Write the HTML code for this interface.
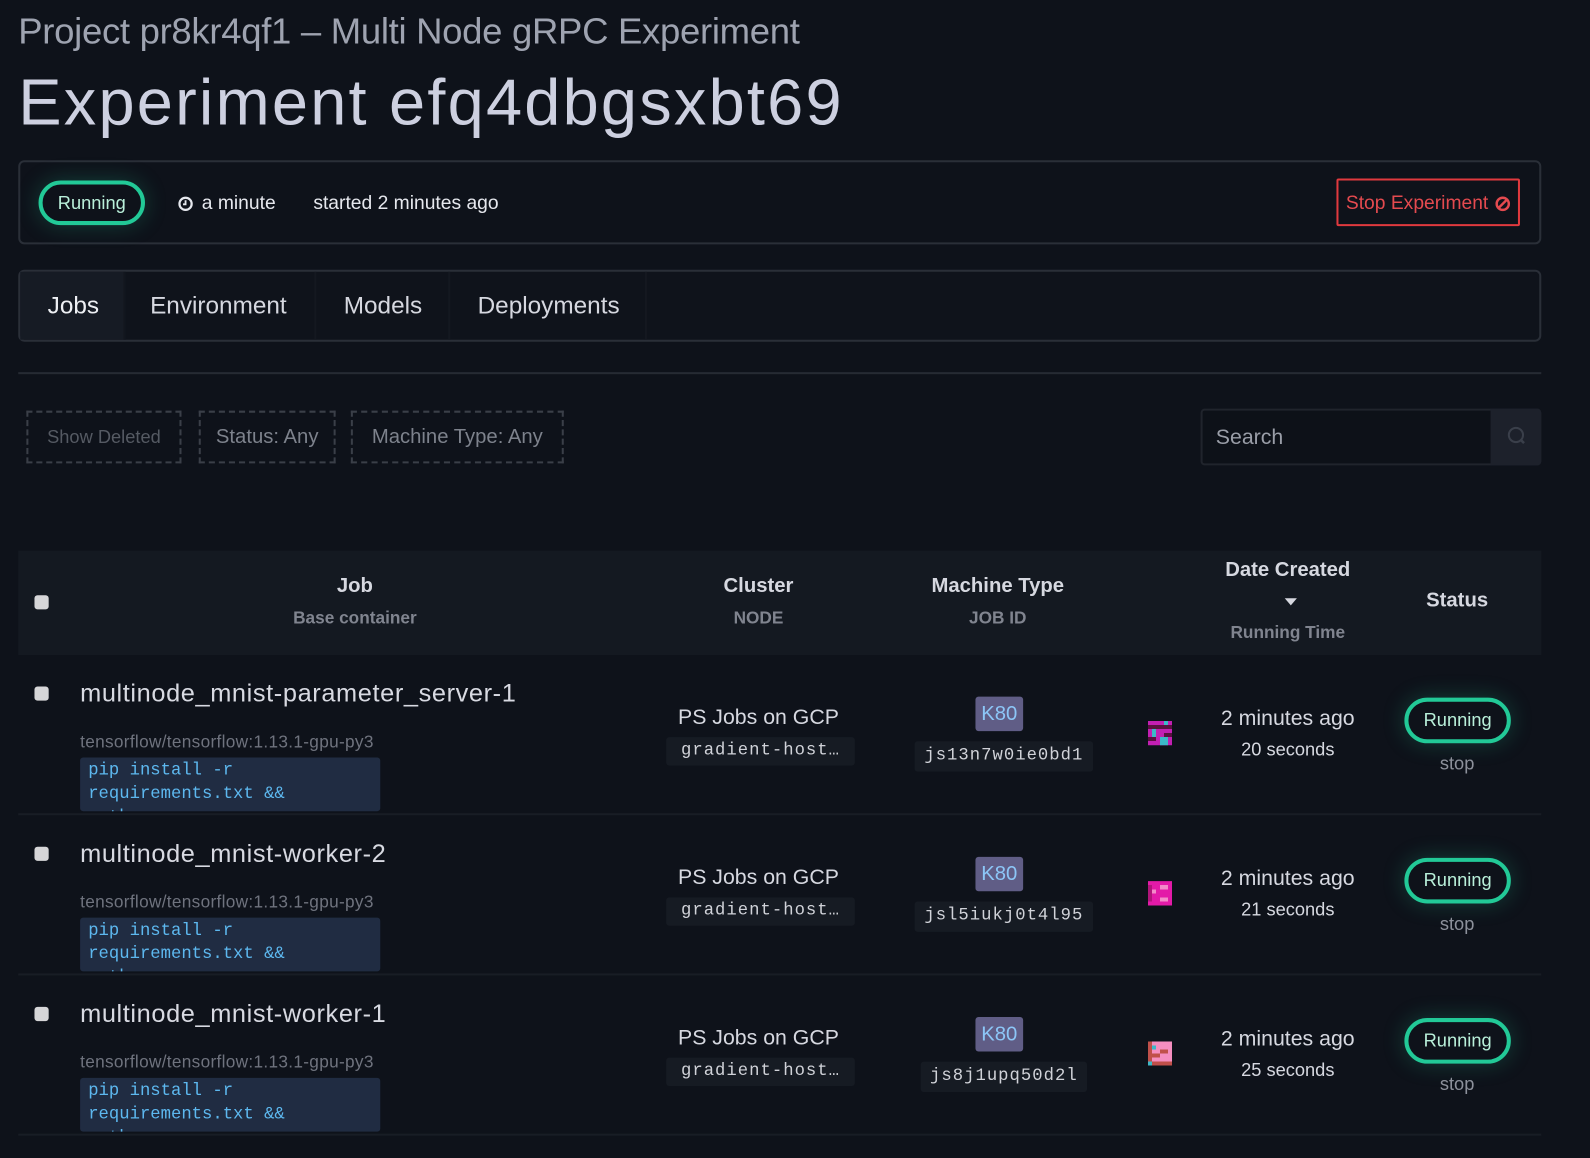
<!DOCTYPE html>
<html><head><meta charset="utf-8"><style>
html,body{margin:0;padding:0;background:#0e121a;width:1590px;height:1158px;overflow:hidden}
#w{position:absolute;left:0;top:0;width:1568px;height:1142px;transform:scale(1.014);transform-origin:0 0;font-family:"Liberation Sans",sans-serif;color:#cdd0da}
.a{position:absolute}
.c{text-align:center}
.pill{position:absolute;border:4px solid #22c997;border-radius:24px;box-sizing:border-box;color:#b9f0da;font-size:18px;display:flex;align-items:center;justify-content:center;box-shadow:0 0 22px rgba(34,201,151,.25)}
.cb{position:absolute;width:14px;height:14px;background:#d6d6d8;border-radius:3px}
.mono{font-family:"Liberation Mono",monospace}
.code{position:absolute;left:79px;width:296px;height:53px;background:#202c42;border-radius:3px;overflow:hidden;color:#5db8ef;font-size:17px;line-height:23px;padding:2px 8px;box-sizing:border-box}
.host{position:absolute;left:657px;width:186px;height:28px;background:#161b23;border-radius:3px;font-size:17px;color:#d0d2d8;text-align:center;line-height:28px;letter-spacing:1px}
.k80{position:absolute;left:962px;width:47px;height:34px;background:#605d86;border-radius:3px;color:#8cc6f7;font-size:20px;text-align:center;line-height:34px}
.jid{position:absolute;height:30px;background:#161b23;border-radius:3px;font-size:17px;color:#d0d2d8;text-align:center;line-height:30px;letter-spacing:1px}
.sep{position:absolute;left:18px;width:1502px;height:2px;background:#181d25}
.filt{position:absolute;top:405px;height:52px;border:2px dashed #3a3f48;box-sizing:border-box;font-size:20px;display:flex;align-items:center;justify-content:center;color:#7d828c}
.jt{position:absolute;left:79px;font-size:25px;color:#d8dae2;letter-spacing:0.6px}
</style></head><body><div id="w">
<div class="a" style="left:18px;top:10px;font-size:36px;color:#9ea3b0;letter-spacing:-0.3px">Project pr8kr4qf1 – Multi Node gRPC Experiment</div>
<div class="a" style="left:18px;top:64px;font-size:64px;color:#cdd0e0;letter-spacing:2.2px">Experiment efq4dbgsxbt69</div>

<div class="a" style="left:18px;top:158px;width:1502px;height:83px;border:2px solid #2a2f38;border-radius:6px;box-sizing:border-box"></div>
<div class="pill" style="left:38px;top:178px;width:105px;height:44px">Running</div>
<svg class="a" style="left:175px;top:193px" width="16" height="16" viewBox="0 0 16 16"><circle cx="8" cy="8" r="6" fill="none" stroke="#e6e8ee" stroke-width="2.2"/><path d="M8 4.5V8.5H5.5" fill="none" stroke="#e6e8ee" stroke-width="1.8"/></svg>
<div class="a" style="left:199px;top:190px;font-size:19px;color:#e6e8ee">a minute</div>
<div class="a" style="left:309px;top:190px;font-size:19px;color:#e6e8ee">started 2 minutes ago</div>
<div class="a" style="left:1318px;top:176px;width:181px;height:47px;border:2px solid #e0393e;border-radius:2px;box-sizing:border-box;color:#e44a4f;font-size:19px;display:flex;align-items:center;justify-content:center;gap:6px;padding-top:2px">Stop Experiment <svg width="16" height="16" viewBox="0 0 16 16"><circle cx="8" cy="8" r="6" fill="none" stroke="#e44a4f" stroke-width="2.4"/><path d="M4 12L12 4" stroke="#e44a4f" stroke-width="2.4"/></svg></div>

<div class="a" style="left:18px;top:266px;width:1502px;height:71px;border:2px solid #2a2f38;border-radius:6px;box-sizing:border-box;background:#0f131b"></div>
<div class="a" style="left:20px;top:268px;width:102px;height:67px;background:#161b24"></div>
<div class="a" style="left:122px;top:268px;width:2px;height:67px;background:#12161e"></div>
<div class="a" style="left:310px;top:268px;width:2px;height:67px;background:#141820"></div>
<div class="a" style="left:442px;top:268px;width:2px;height:67px;background:#141820"></div>
<div class="a" style="left:636px;top:268px;width:2px;height:67px;background:#141820"></div>
<div class="a" style="left:47px;top:288px;font-size:24px;color:#eef0f4">Jobs</div>
<div class="a" style="left:148px;top:288px;font-size:24px;color:#d6d8e0">Environment</div>
<div class="a" style="left:339px;top:288px;font-size:24px;color:#d6d8e0">Models</div>
<div class="a" style="left:471px;top:288px;font-size:24px;color:#d6d8e0">Deployments</div>

<div class="a" style="left:18px;top:367px;width:1502px;height:2px;background:#262b33"></div>

<div class="filt" style="left:26px;width:153px;font-size:18px;color:#555a63">Show Deleted</div>
<div class="filt" style="left:196px;width:135px">Status: Any</div>
<div class="filt" style="left:346px;width:210px">Machine Type: Any</div>
<div class="a" style="left:1184px;top:403px;width:336px;height:56px;border:2px solid #20242c;border-radius:4px;box-sizing:border-box;background:#0d1118"></div>
<div class="a" style="left:1470px;top:403px;width:50px;height:56px;background:#1d212b;border-radius:0 4px 4px 0"></div>
<svg class="a" style="left:1484px;top:418px" width="24" height="24" viewBox="0 0 24 24"><circle cx="11" cy="11" r="7" fill="none" stroke="#3a3f4a" stroke-width="2"/><path d="M16 16l3 3" stroke="#3a3f4a" stroke-width="2.5"/></svg>
<div class="a" style="left:1199px;top:420px;font-size:21px;color:#9a9ea8">Search</div>

<div class="a" style="left:18px;top:543px;width:1502px;height:103px;background:#141921"></div>
<div class="cb" style="left:34px;top:587px"></div>
<div class="a c" style="left:250px;width:200px;top:567px;font-size:20px;font-weight:bold;color:#d6d8e0">Job</div>
<div class="a c" style="left:250px;width:200px;top:600px;font-size:17px;font-weight:bold;color:#80848f">Base container</div>
<div class="a c" style="left:648px;width:200px;top:567px;font-size:20px;font-weight:bold;color:#d6d8e0">Cluster</div>
<div class="a c" style="left:648px;width:200px;top:600px;font-size:17px;font-weight:bold;color:#80848f">NODE</div>
<div class="a c" style="left:884px;width:200px;top:567px;font-size:20px;font-weight:bold;color:#d6d8e0">Machine Type</div>
<div class="a c" style="left:884px;width:200px;top:600px;font-size:17px;font-weight:bold;color:#80848f">JOB ID</div>
<div class="a c" style="left:1170px;width:200px;top:551px;font-size:20px;font-weight:bold;color:#d6d8e0">Date Created</div>
<div class="a" style="left:1267px;top:590px;width:0;height:0;border-left:6px solid transparent;border-right:6px solid transparent;border-top:7px solid #d6d8e0"></div>
<div class="a c" style="left:1170px;width:200px;top:614px;font-size:17px;font-weight:bold;color:#80848f">Running Time</div>
<div class="a c" style="left:1387px;width:100px;top:581px;font-size:20px;font-weight:bold;color:#d6d8e0">Status</div>

<!-- row1 -->
<div class="cb" style="left:34px;top:677px"></div>
<div class="jt" style="top:670px">multinode_mnist-parameter_server-1</div>
<div class="a" style="left:79px;top:722px;font-size:17px;color:#6f737e;letter-spacing:0.3px">tensorflow/tensorflow:1.13.1-gpu-py3</div>
<div class="code mono" style="top:747px">pip install -r<br>requirements.txt &amp;&amp;<br>python</div>
<div class="a c" style="left:648px;width:200px;top:696px;font-size:21px;color:#d6d8e0">PS Jobs on GCP</div>
<div class="host mono" style="top:727px">gradient-host…</div>
<div class="k80" style="top:687px">K80</div>
<div class="jid mono" style="left:902px;width:176px;top:731px">js13n7w0ie0bd1</div>
<svg class="a" style="left:1132px;top:711px" width="24" height="24" viewBox="0 0 6 6" shape-rendering="crispEdges"><rect width="6" height="6" fill="#c21fb3"/><rect x="0" y="1" width="6" height="1" fill="#5a1040"/><rect x="1" y="2" width="1" height="2" fill="#3cb8c8"/><rect x="4" y="0" width="1" height="1" fill="#3cb8c8"/><rect x="3" y="4" width="2" height="2" fill="#3cb8c8"/><rect x="0" y="4" width="2" height="1" fill="#5a1040"/><rect x="4" y="3" width="2" height="1" fill="#5a1040"/></svg>
<div class="a c" style="left:1170px;width:200px;top:697px;font-size:21px;color:#d6d8e0">2 minutes ago</div>
<div class="a c" style="left:1170px;width:200px;top:729px;font-size:18px;color:#d6d8e0">20 seconds</div>
<div class="pill" style="left:1385px;top:688px;width:105px;height:45px">Running</div>
<div class="a c" style="left:1387px;width:100px;top:743px;font-size:18px;color:#8d919b">stop</div>
<div class="sep" style="top:802px"></div>

<!-- row2 -->
<div class="cb" style="left:34px;top:835px"></div>
<div class="jt" style="top:828px">multinode_mnist-worker-2</div>
<div class="a" style="left:79px;top:880px;font-size:17px;color:#6f737e;letter-spacing:0.3px">tensorflow/tensorflow:1.13.1-gpu-py3</div>
<div class="code mono" style="top:905px">pip install -r<br>requirements.txt &amp;&amp;<br>python</div>
<div class="a c" style="left:648px;width:200px;top:854px;font-size:21px;color:#d6d8e0">PS Jobs on GCP</div>
<div class="host mono" style="top:885px">gradient-host…</div>
<div class="k80" style="top:845px">K80</div>
<div class="jid mono" style="left:902px;width:176px;top:889px">jsl5iukj0t4l95</div>
<svg class="a" style="left:1132px;top:869px" width="24" height="24" viewBox="0 0 6 6" shape-rendering="crispEdges"><rect width="6" height="6" fill="#e31aa8"/><rect x="3" y="1" width="2" height="1" fill="#f38bc9"/><rect x="1" y="2" width="1" height="1" fill="#f38bc9"/><rect x="3" y="4" width="2" height="1" fill="#f38bc9"/><rect x="0" y="1" width="1" height="4" fill="#b0157a"/></svg>
<div class="a c" style="left:1170px;width:200px;top:855px;font-size:21px;color:#d6d8e0">2 minutes ago</div>
<div class="a c" style="left:1170px;width:200px;top:887px;font-size:18px;color:#d6d8e0">21 seconds</div>
<div class="pill" style="left:1385px;top:846px;width:105px;height:45px">Running</div>
<div class="a c" style="left:1387px;width:100px;top:901px;font-size:18px;color:#8d919b">stop</div>
<div class="sep" style="top:960px"></div>

<!-- row3 -->
<div class="cb" style="left:34px;top:993px"></div>
<div class="jt" style="top:986px">multinode_mnist-worker-1</div>
<div class="a" style="left:79px;top:1038px;font-size:17px;color:#6f737e;letter-spacing:0.3px">tensorflow/tensorflow:1.13.1-gpu-py3</div>
<div class="code mono" style="top:1063px">pip install -r<br>requirements.txt &amp;&amp;<br>python</div>
<div class="a c" style="left:648px;width:200px;top:1012px;font-size:21px;color:#d6d8e0">PS Jobs on GCP</div>
<div class="host mono" style="top:1043px">gradient-host…</div>
<div class="k80" style="top:1003px">K80</div>
<div class="jid mono" style="left:908px;width:164px;top:1047px">js8j1upq50d2l</div>
<svg class="a" style="left:1132px;top:1027px" width="24" height="24" viewBox="0 0 6 6" shape-rendering="crispEdges"><rect width="6" height="6" fill="#f58ec0"/><rect x="0" y="0" width="1" height="6" fill="#c0504a"/><rect x="1" y="1" width="1" height="1" fill="#3cb8c8"/><rect x="3" y="2" width="2" height="1" fill="#c0504a"/><rect x="1" y="3" width="2" height="1" fill="#c0504a"/><rect x="0" y="5" width="6" height="1" fill="#c0504a"/><rect x="0" y="5" width="1" height="1" fill="#3cb8c8"/></svg>
<div class="a c" style="left:1170px;width:200px;top:1013px;font-size:21px;color:#d6d8e0">2 minutes ago</div>
<div class="a c" style="left:1170px;width:200px;top:1045px;font-size:18px;color:#d6d8e0">25 seconds</div>
<div class="pill" style="left:1385px;top:1004px;width:105px;height:45px">Running</div>
<div class="a c" style="left:1387px;width:100px;top:1059px;font-size:18px;color:#8d919b">stop</div>
<div class="sep" style="top:1118px"></div>
</div></body></html>
